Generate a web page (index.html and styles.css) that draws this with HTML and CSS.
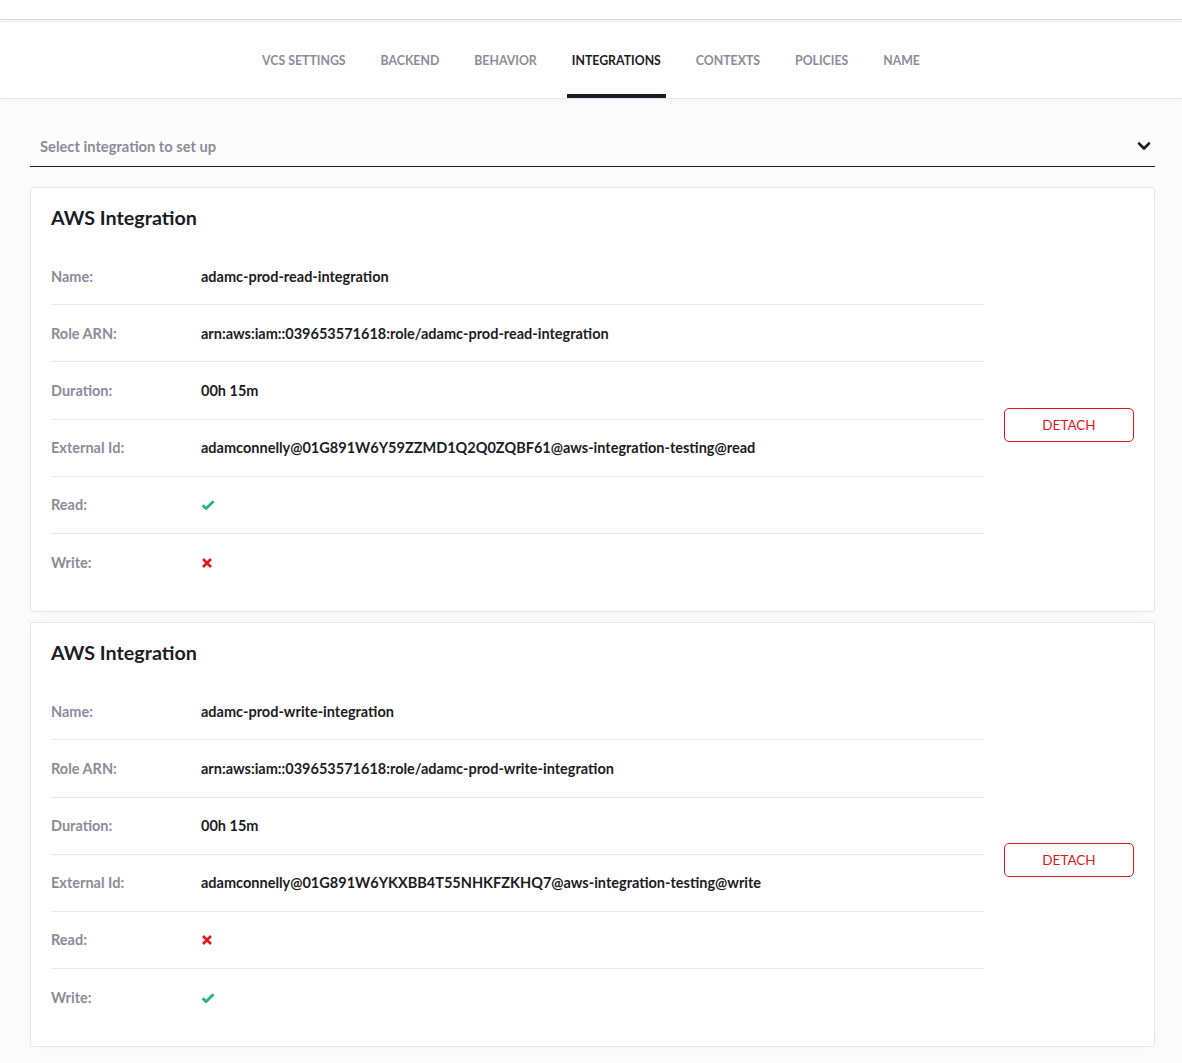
FILE: index.html
```html
<!DOCTYPE html>
<html lang="en">
<head>
    <meta charset="UTF-8">
    <meta name="viewport" content="width=device-width, initial-scale=1.0">
    <title>Stack integrations</title>
    <link rel="stylesheet" href="styles.css">
</head>
<body>

    <div class="topbar"></div>

    <nav class="tabs">
        <a class="tab">VCS Settings</a>
        <a class="tab">Backend</a>
        <a class="tab">Behavior</a>
        <a class="tab active">Integrations</a>
        <a class="tab">Contexts</a>
        <a class="tab">Policies</a>
        <a class="tab">Name</a>
    </nav>

    <main class="content">
        <div class="select">
            <span>Select integration to set up</span>
            <svg class="chevron" width="14" height="10" viewBox="0 0 14 10">
                <path d="M2 2.5 L7 7.5 L12 2.5" fill="none" stroke="#1c1c24" stroke-width="2.6" stroke-linecap="round" stroke-linejoin="round"/>
            </svg>
        </div>

        <section class="card">
            <h2>AWS Integration</h2>
            <div class="card-body">
                <dl class="rows">
                    <div class="row"><dt>Name:</dt><dd>adamc-prod-read-integration</dd></div>
                    <div class="row"><dt>Role ARN:</dt><dd>arn:aws:iam::039653571618:role/adamc-prod-read-integration</dd></div>
                    <div class="row"><dt>Duration:</dt><dd>00h 15m</dd></div>
                    <div class="row"><dt>External Id:</dt><dd>adamconnelly@01G891W6Y59ZZMD1Q2Q0ZQBF61@aws-integration-testing@read</dd></div>
                    <div class="row"><dt>Read:</dt><dd>
                        <svg class="ok" width="14" height="12" viewBox="0 0 14 12"><path d="M1.5 6.2 L5.2 9.6 L12.5 2.2" fill="none" stroke="#2bb673" stroke-width="2.8" stroke-linejoin="round"/></svg>
                    </dd></div>
                    <div class="row"><dt>Write:</dt><dd>
                        <svg class="no" width="12" height="12" viewBox="0 0 12 12"><path d="M2 2 L10 10 M10 2 L2 10" stroke="#e0161e" stroke-width="2.6"/></svg>
                    </dd></div>
                </dl>
                <button class="detach">DETACH</button>
            </div>
        </section>

        <section class="card">
            <h2>AWS Integration</h2>
            <div class="card-body">
                <dl class="rows">
                    <div class="row"><dt>Name:</dt><dd>adamc-prod-write-integration</dd></div>
                    <div class="row"><dt>Role ARN:</dt><dd>arn:aws:iam::039653571618:role/adamc-prod-write-integration</dd></div>
                    <div class="row"><dt>Duration:</dt><dd>00h 15m</dd></div>
                    <div class="row"><dt>External Id:</dt><dd>adamconnelly@01G891W6YKXBB4T55NHKFZKHQ7@aws-integration-testing@write</dd></div>
                    <div class="row"><dt>Read:</dt><dd>
                        <svg class="no" width="12" height="12" viewBox="0 0 12 12"><path d="M2 2 L10 10 M10 2 L2 10" stroke="#e0161e" stroke-width="2.6"/></svg>
                    </dd></div>
                    <div class="row"><dt>Write:</dt><dd>
                        <svg class="ok" width="14" height="12" viewBox="0 0 14 12"><path d="M1.5 6.2 L5.2 9.6 L12.5 2.2" fill="none" stroke="#2bb673" stroke-width="2.8" stroke-linejoin="round"/></svg>
                    </dd></div>
                </dl>
                <button class="detach">DETACH</button>
            </div>
        </section>
    </main>

</body>
</html>
```

FILE: styles.css
```css
body {
    margin: 0;
    font-family: Lato, "Open Sans", sans-serif;
    background: #fcfcfd;
    color: #1c1c24;
}

.topbar {
    height: 19px;
    background: #fff;
    border-bottom: 1px solid #d6d6dc;
}

.tabs {
    display: flex;
    justify-content: center;
    gap: 25px;
    height: 76px;
    margin-top: 1px;
    background: #fff;
    border-top: 1px solid #ececf0;
    border-bottom: 1px solid #e6e6ea;
    box-shadow: 0 2px 6px rgba(0, 0, 0, 0.03);
}
.tab {
    display: flex;
    align-items: center;
    padding: 4px 5px 0 5px;
    font-size: 12.3px;
    font-weight: 700;
    text-transform: uppercase;
    color: #8c8c98;
    border-bottom: 4px solid transparent;
    box-sizing: border-box;
}
.tab.active {
    color: #1c1c24;
    border-bottom-color: #1c1c24;
}

.content {
    padding: 28px 27px 20px 30px;
}

.select {
    display: flex;
    align-items: center;
    justify-content: space-between;
    height: 40px;
    padding: 0 4px 2px 10px;
    box-sizing: border-box;
    border-bottom: 1px solid #1c1c24;
    font-size: 14.7px;
    font-weight: 700;
    color: #8c8c98;
    margin-bottom: 20px;
}

.card {
    background: #fff;
    border: 1px solid #e6e6ea;
    border-radius: 3px;
    padding: 17px 20px 20px 20px;
    margin-bottom: 10px;
    box-shadow: 0 0 24px rgba(0, 0, 0, 0.025);
}
.card h2 {
    margin: 0 0 17px 0;
    font-size: 19.7px;
    font-weight: 700;
    line-height: 26px;
}

.card-body {
    display: flex;
    align-items: center;
    gap: 20px;
}

.rows {
    flex: 1;
    margin: 0;
}
.row {
    display: flex;
    align-items: center;
    height: 57.2px;
    box-sizing: border-box;
    border-bottom: 1px solid #e8e8ec;
    font-size: 14.5px;
    font-weight: 700;
}
.row:last-child {
    border-bottom: none;
}
.row dt {
    width: 150px;
    color: #8c8c98;
}
.row dd {
    margin: 0;
    display: flex;
    align-items: center;
}

.detach {
    width: 130px;
    height: 34px;
    margin-top: 10px;
    background: #fff;
    border: 1px solid #e0161e;
    border-radius: 5px;
    color: #e0161e;
    font-family: inherit;
    font-size: 13.5px;
    font-weight: 400;
}
```
